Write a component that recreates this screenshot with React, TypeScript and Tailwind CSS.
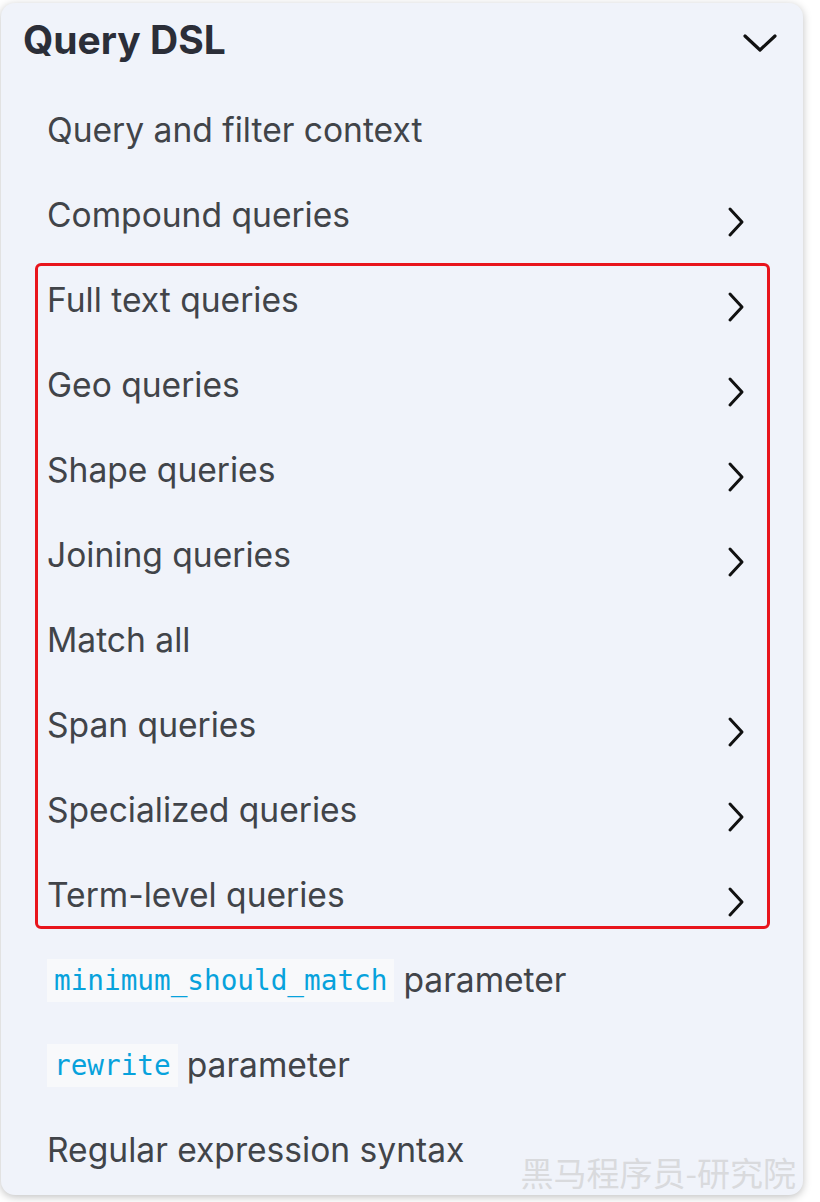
import React from "react";

type Item = {
  label: string;
  code?: string;
  arrow?: boolean;
};

const items: Item[] = [
  { label: "Query and filter context" },
  { label: "Compound queries", arrow: true },
  { label: "Full text queries", arrow: true },
  { label: "Geo queries", arrow: true },
  { label: "Shape queries", arrow: true },
  { label: "Joining queries", arrow: true },
  { label: "Match all" },
  { label: "Span queries", arrow: true },
  { label: "Specialized queries", arrow: true },
  { label: "Term-level queries", arrow: true },
  { label: "parameter", code: "minimum_should_match" },
  { label: "parameter", code: "rewrite" },
  { label: "Regular expression syntax" },
];

function ChevronRight() {
  return (
    <svg width="18" height="32" viewBox="0 0 18 32" fill="none" className="mt-[13px]">
      <path d="M3 3 L15 16 L3 29" stroke="#111" strokeWidth="3" strokeLinecap="round" strokeLinejoin="round" />
    </svg>
  );
}

function ChevronDown() {
  return (
    <svg width="34" height="20" viewBox="0 0 34 20" fill="none" className="mt-[6px]">
      <path d="M2 3 L17 17 L32 3" stroke="#111" strokeWidth="3.2" strokeLinecap="round" strokeLinejoin="round" />
    </svg>
  );
}

export default function App() {
  return (
    <div className="w-[820px] h-[1202px] bg-white pt-[3px] pl-[1px] font-['Inter',sans-serif]">
      <div className="relative w-[802px] h-[1192px] rounded-[14px] bg-[#f0f3fa] shadow-[0_2px_8px_rgba(0,0,0,0.25)] overflow-hidden">
        <div className="flex items-center justify-between h-[74px] pl-[22px] pr-[26px]">
          <h2 className="text-[39px] font-bold text-[#2b2e38]">Query DSL</h2>
          <ChevronDown />
        </div>
        <div className="relative mt-[11px]">
          {/* highlight box */}
          <div className="absolute left-[34px] top-[175px] w-[735px] h-[666px] border-[3px] border-[#e8141c] rounded-[6px]" />
          {items.map((item, i) => (
            <div key={i} className="flex items-center justify-between h-[85px] pl-[46px] pr-[58px]">
              <div className="flex items-center text-[33.6px] text-[#414449]">
                {item.code && (
                  <code className="mr-[9px] px-[7px] py-[1px] bg-[#f8f9fb] text-[#07a2dc] text-[27.7px] font-['DejaVu_Sans_Mono',monospace]">
                    {item.code}
                  </code>
                )}
                <span>{item.label}</span>
              </div>
              {item.arrow && <ChevronRight />}
            </div>
          ))}
        </div>
        <div className="absolute right-[7px] bottom-[-2px] text-[33px] text-[#d9dadd] font-['Noto_Sans_CJK_SC',sans-serif]">
          黑马程序员-研究院
        </div>
      </div>
    </div>
  );
}
